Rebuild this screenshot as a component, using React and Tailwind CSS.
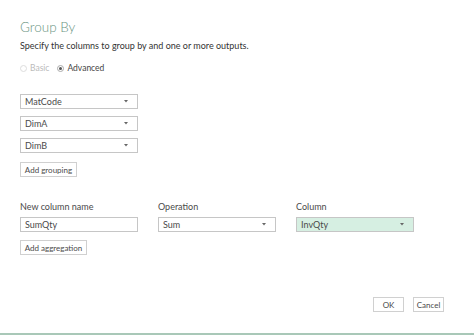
import React from 'react';

const Caret = () => (
  <svg width="4" height="3" viewBox="0 0 4 3" className="shrink-0">
    <path d="M0 0h4L2 2.5z" fill="#666" />
  </svg>
);

const Select = ({ value, className = '' }) => (
  <div className={`flex items-center justify-between h-[15px] border border-[#c6c6c6] pl-[4px] pr-[9px] text-[9px] text-[#4a4a4a] ${className}`}>
    <span>{value}</span>
    <Caret />
  </div>
);

const Btn = ({ children, className = '' }) => (
  <div className={`flex items-center justify-center whitespace-nowrap h-[15px] border border-[#d0d0d0] text-[8px] text-[#4a4a4a] bg-white ${className}`}>
    {children}
  </div>
);

export default function App() {
  return (
    <div className="w-[474px] h-[335px] bg-white flex flex-col font-['Lato',sans-serif] overflow-hidden">
      <div className="flex-1 flex flex-col pl-[20px]">
        <div className="mt-[18px] text-[13.5px] leading-[18px] font-light text-[#6a9482]">Group By</div>
        <div className="mt-[4px] text-[9px] leading-[12px] text-[#333]">Specify the columns to group by and one or more outputs.</div>
        <div className="mt-[10px] flex items-center gap-[8px] text-[8.5px] leading-[12px]">
          <div className="flex items-center gap-[3px] text-[#bbb]">
            <span className="w-[7px] h-[7px] rounded-full border border-[#ddd]" />
            Basic
          </div>
          <div className="flex items-center gap-[3px] text-[#444]">
            <span className="w-[7px] h-[7px] rounded-full border border-[#aaa] flex items-center justify-center">
              <span className="w-[3px] h-[3px] rounded-full bg-[#555]" />
            </span>
            Advanced
          </div>
        </div>

        <div className="mt-[20px] flex flex-col gap-[7px] w-[118px]">
          <Select value="MatCode" />
          <Select value="DimA" />
          <Select value="DimB" />
        </div>
        <Btn className="mt-[9px] w-[57px]">Add grouping</Btn>

        <div className="mt-[24px] flex gap-[20px] text-[9px] text-[#4a4a4a]">
          <div className="w-[118px] flex flex-col gap-[5px]">
            <span className="leading-[11px]">New column name</span>
            <div className="flex items-center h-[15px] border border-[#c6c6c6] pl-[4px] text-[9px]">SumQty</div>
          </div>
          <div className="w-[118px] flex flex-col gap-[5px]">
            <span className="leading-[11px]">Operation</span>
            <Select value="Sum" />
          </div>
          <div className="w-[118px] flex flex-col gap-[5px]">
            <span className="leading-[11px]">Column</span>
            <Select value="InvQty" className="bg-[#d6efe2] border-[#bddccc]" />
          </div>
        </div>
        <Btn className="mt-[8px] w-[67px]">Add aggregation</Btn>

        <div className="mt-auto mb-[21px] flex justify-end gap-[9px] pr-[30px]">
          <Btn className="w-[31px] h-[14px] border-[#7aa590]">OK</Btn>
          <Btn className="w-[31px] h-[14px]">Cancel</Btn>
        </div>
      </div>
      <div className="h-[2px] bg-[#a9c8b8]" />
    </div>
  );
}
